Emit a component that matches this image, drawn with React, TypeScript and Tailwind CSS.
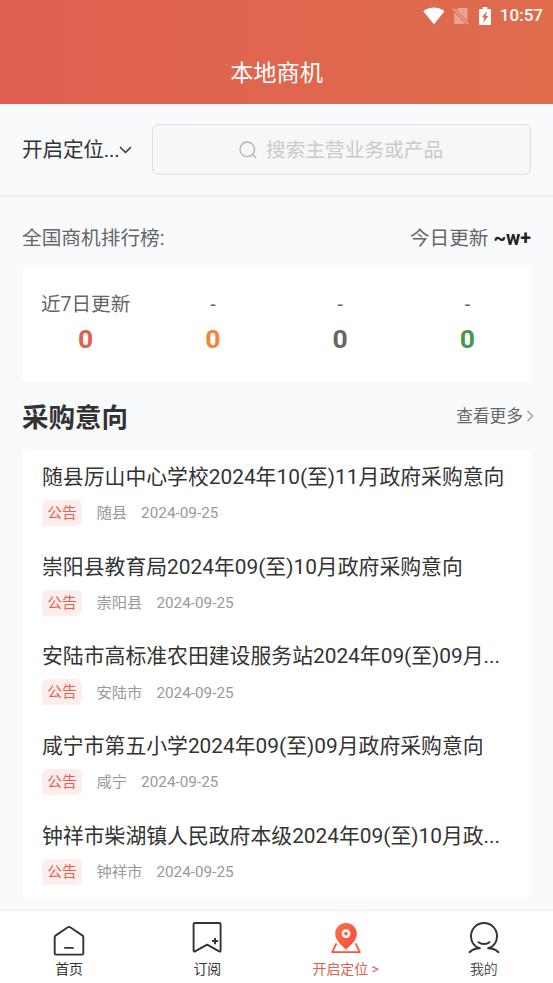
import { useState } from "react";

const stats = [
  { label: "近7日更新", value: "0", color: "text-[#e0604d]" },
  { label: "-", value: "0", color: "text-[#f08538]" },
  { label: "-", value: "0", color: "text-[#666666]" },
  { label: "-", value: "0", color: "text-[#43984a]" },
];

const notices = [
  { title: "随县厉山中心学校2024年10(至)11月政府采购意向", area: "随县", date: "2024-09-25" },
  { title: "崇阳县教育局2024年09(至)10月政府采购意向", area: "崇阳县", date: "2024-09-25" },
  { title: "安陆市高标准农田建设服务站2024年09(至)09月...", area: "安陆市", date: "2024-09-25" },
  { title: "咸宁市第五小学2024年09(至)09月政府采购意向", area: "咸宁", date: "2024-09-25" },
  { title: "钟祥市柴湖镇人民政府本级2024年09(至)10月政...", area: "钟祥市", date: "2024-09-25" },
];

const StatusBar = () => (
  <div className="flex h-[31px] items-center justify-end pr-[10px] text-white">
    <svg width="22" height="18" viewBox="0 0 22 18" fill="currentColor">
      <path d="M0.3 4.2C6.5-.6 15.3-.6 21.5 4.2L10.9 17.3Z" />
    </svg>
    <svg className="ml-[7px]" width="18" height="18" viewBox="0 0 18 18">
      <path d="M6.8 1H15.5V13.8L4.2 2.9ZM2.2 5.2L14 17H2.2Z" fill="#fff" fillOpacity=".38" />
      <path d="M1 1.6L16.7 17.2" stroke="#fff" strokeOpacity=".38" strokeWidth="1.4" />
    </svg>
    <svg className="ml-[9px]" width="12" height="18" viewBox="0 0 12 18">
      <path d="M3.7 0H8.3V2H11Q12 2 12 3V17Q12 18 11 18H1Q0 18 0 17V3Q0 2 1 2H3.7Z" fill="#fff" />
      <path d="M8 4.3L2.8 10.3H5.4L4.3 15.5L9.3 9H6.7Z" fill="#df674d" />
    </svg>
    <span className="ml-[9px] text-[17px] leading-none font-medium">10:57</span>
  </div>
);

const HomeIcon = () => (
  <svg width="34" height="34" viewBox="0 -2.6 34 34" overflow="visible" fill="none" stroke="#333" strokeWidth="1.9" strokeLinejoin="round" strokeLinecap="round">
    <path d="M2.7 13.5Q2.7 12.5 3.5 12L15.8 3.7Q17 2.9 18.2 3.7L30.6 12Q31.3 12.5 31.3 13.5V29.6Q31.3 31 30 31H4Q2.7 31 2.7 29.6Z" />
    <path d="M13 24.3H21" />
  </svg>
);

const BookmarkIcon = () => (
  <svg width="34" height="34" viewBox="0 0 34 34" fill="none" stroke="#333" strokeWidth="1.9" strokeLinejoin="round" strokeLinecap="round">
    <path d="M4.7 2H29.4Q30.6 2 30.6 3.2V29.5Q30.6 31 29.2 30.3L17.2 23.6L5 30.3Q3.6 31 3.6 29.5V3.2Q3.6 2 4.7 2Z" />
    <path d="M25 17.8V22.4M22.7 20.1H27.3" strokeWidth="2" />
  </svg>
);

const LocationIcon = () => (
  <svg width="34" height="34" viewBox="0 0 34 34" fill="none">
    <defs>
      <linearGradient id="pin" x1="0" y1="0" x2="1" y2="1">
        <stop offset="0" stopColor="#ff7148" />
        <stop offset="1" stopColor="#f44b3b" />
      </linearGradient>
    </defs>
    <path
      fill="url(#pin)"
      fillRule="evenodd"
      d="M17 2C10.700 2 6.200 6.800 6.200 12.800C6.200 19.300 12 23.900 17 28.700C22 23.900 27.800 19.300 27.800 12.800C27.800 6.800 23.300 2 17 2ZM17 8.200A4.400 4.400 0 1 1 17 17A4.400 4.400 0 1 1 17 8.200ZM17 10.700A1.900 1.900 0 1 0 17 14.500A1.900 1.900 0 1 0 17 10.700Z"
    />
    <path d="M7.400 22.400L3.200 31.200H30.800L26.600 22.400" stroke="#f9573f" strokeWidth="1.800" strokeLinejoin="round" />
  </svg>
);

const UserIcon = () => (
  <svg width="34" height="34" viewBox="0 0 34 34" fill="none" stroke="#333" strokeWidth="2" strokeLinecap="round" strokeLinejoin="round">
    <path d="M2.500 31.200C5.500 28.600 9 27.300 12.800 27.300C7.500 25.700 4 20.900 4 15.200C4 7.900 9.700 2 17 2C24.300 2 30 7.900 30 15.200C30 20.900 26.500 25.700 21.200 27.300C25 27.300 28.500 28.600 31.500 31.200" />
    <path d="M11.500 21.200C14.500 23.500 19.500 23.500 22.500 21.200" />
  </svg>
);

const tabs = [
  { name: "首页", icon: <HomeIcon />, color: "text-[#333333]" },
  { name: "订阅", icon: <BookmarkIcon />, color: "text-[#333333]" },
  { name: "开启定位 >", icon: <LocationIcon />, color: "text-[#e0604d]" },
  { name: "我的", icon: <UserIcon />, color: "text-[#555555]" },
];

const App = () => {
  const [keyword, setKeyword] = useState("");

  return (
    <div className="flex h-[983px] w-full flex-col overflow-hidden bg-[#f9fafc] font-[Roboto,'Noto_Sans_CJK_SC',sans-serif] text-[#333333]">
      <header className="h-[104px] shrink-0 bg-gradient-to-r from-[#e06050] to-[#de6c4d]">
        <StatusBar />
        <h1 className="mt-[25px] text-center text-[23.2px] leading-[34px] text-white">本地商机</h1>
      </header>

      {/* Location and search */}
      <div className="flex h-[93px] shrink-0 items-center border-b-2 border-[#eeefef] px-[22px]">
        <button type="button" className="flex w-[130px] items-center pt-px text-[20.7px] leading-[30px]">
          <span className="tracking-[-0.25px]">开启定位...</span>
          <svg width="14" height="10" viewBox="0 0 14 10" fill="none" stroke="#333" strokeWidth="1.5">
            <path d="M1 2L6.500 7.500L12 2" />
          </svg>
        </button>
        <label className="flex h-[51px] flex-1 items-center rounded-md border border-[#dedfe1] bg-[#f7f7f7] pl-[86px]">
          <svg width="18" height="18" viewBox="0 0 18 18" fill="none" stroke="#b3b3b3" strokeWidth="1.400">
            <circle cx="8.300" cy="8.300" r="7.300" />
            <path d="M13.500 13.500L17 17" />
          </svg>
          <input
            type="text"
            placeholder="搜索主营业务或产品"
            value={keyword}
            onChange={(e) => setKeyword(e.target.value)}
            className="ml-[9px] w-[220px] bg-transparent pt-[2px] text-[19.7px] text-[#666666] outline-none placeholder:text-[#cacaca]"
          />
        </label>
      </div>

      {/* Ranking */}
      <div className="mt-[27px] flex h-[30px] shrink-0 items-center justify-between px-[22px] text-[19.7px] text-[#666666]">
        <span>全国商机排行榜:</span>
        <span>
          今日更新 <b className="text-[19.500px] text-[#222222]">~w+</b>
        </span>
      </div>
      <div className="mx-[22px] mt-[11px] grid h-[116px] shrink-0 grid-cols-4 rounded-md bg-white pt-[25px] text-center">
        {stats.map((item, i) => (
          <div key={i}>
            <div className="text-[19.600px] leading-[30px] text-[#666666]">{item.label}</div>
            <div className={`mt-[3px] text-[26.500px] leading-[32px] font-bold ${item.color}`}>{item.value}</div>
          </div>
        ))}
      </div>

      <div className="mt-[16px] flex h-[40px] shrink-0 items-center justify-between pr-[19px] pl-[22px]">
        <h2 className="pt-px text-[26.500px] font-bold">采购意向</h2>
        <a href="#" className="flex items-center text-[16.700px] text-[#666666]">
          查看更多
          <svg className="mb-px ml-[3px]" width="8" height="12" viewBox="0 0 8 12" fill="none" stroke="#999" strokeWidth="1.300">
            <path d="M1.500 0.800L6.500 6L1.500 11.200" />
          </svg>
        </a>
      </div>

      {/* Notices */}
      <ul className="mx-[22px] mt-[13px] h-[448px] shrink-0 rounded-md bg-white pl-[20px]">
        {notices.map((item) => (
          <li key={item.title} className="h-[89.700px] pt-[12px]">
            <h3 className="text-[20.850px] leading-[30px] whitespace-nowrap">{item.title}</h3>
            <div className="mt-[8px] flex h-[26px] items-center text-[15.300px] text-[#999999]">
              <span className="flex h-[26px] w-[40px] items-center justify-center rounded-t-md rounded-br-md bg-[#fdeeed] text-[14.800px] text-[#e8604d]">
                公告
              </span>
              <span className="ml-[14.500px] pt-[1.500px]">{item.area}</span>
              <span className="ml-[14px] pt-[1.500px]">{item.date}</span>
            </div>
          </li>
        ))}
      </ul>

      <nav className="mt-auto grid h-[73px] shrink-0 grid-cols-4 border-t border-[#f0f1f3] bg-white pt-[10px]">
        {tabs.map((tab) => (
          <a key={tab.name} href="#" className={`flex flex-col items-center ${tab.color}`}>
            {tab.icon}
            <span className="mt-[4px] text-[13.900px] leading-[20px]">{tab.name}</span>
          </a>
        ))}
      </nav>
    </div>
  );
};

export default App;
